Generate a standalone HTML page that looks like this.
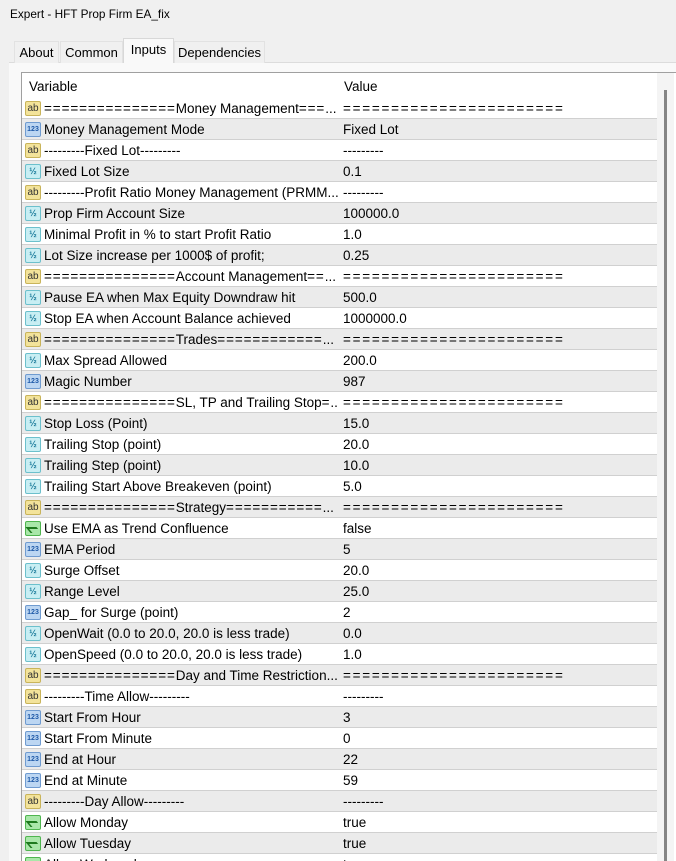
<!DOCTYPE html>
<html><head><meta charset="utf-8"><style>
*{margin:0;padding:0;box-sizing:border-box}
body{width:676px;height:861px;overflow:hidden;background:#f0f0f0;font-family:"Liberation Sans",sans-serif;font-size:13.5px;color:#000;position:relative}
.title{position:absolute;left:10px;top:7px;font-size:11.8px}
.tab{position:absolute;top:41px;height:22px;padding-top:3px;text-align:center;background:#f0f0f0;border:1px solid #e2e2e2;border-bottom:none;font-size:13px}
.tab.sel{top:38px;height:25px;background:#f9f9f9;border-color:#d8d8d8}
.panel{position:absolute;left:9px;top:62px;width:667px;height:799px;background:#f9f9f9;border-top:1px solid #dcdcdc}
.tbl{position:absolute;left:21px;top:72px;width:655px;height:789px;background:#fff;border:1px solid #a0a0a0;border-right:none;border-bottom:none;overflow:hidden}
.hdr{position:absolute;left:0;top:0;width:636px;height:25px}
.hdr span{position:absolute;top:6px}
.row{position:absolute;left:0;width:635px;height:21px;border-bottom:1px solid #d0d0d0}
.row.g{background:#ebebeb}
.row .v{position:absolute;left:22px;top:3px;white-space:nowrap;width:294px;overflow:hidden}
.row .val{position:absolute;left:321px;top:3px;white-space:nowrap}
.v .e{letter-spacing:0.9px}
.val .e{letter-spacing:1.75px}
.ic{position:absolute;left:3px;top:3px;width:16px;height:15px;font-size:8px;font-weight:bold;line-height:13px;text-align:center;border:1px solid;border-radius:2px}
.ab{background:#f3e39a;border-color:#c9b45a;color:#333;font-size:10px;font-weight:normal}
.n{background:#bcd6f2;border-color:#6f9bd0;color:#1f5aa8;font-size:7px}
.d{background:#c8eef3;border-color:#6cc0cc;color:#1a7a9a;font-size:9px}
.b{background:#a9e7a9;border-color:#4fb54f}
.b:after{content:"";position:absolute;left:2px;top:5px;width:9px;height:4px;border-left:2px solid #1e7a1e;border-top:2px solid #1e7a1e;transform:skewX(40deg)}
.sb{position:absolute;left:657px;top:73px;width:17px;height:788px;background:#f4f4f4}
.th{position:absolute;left:664px;top:90px;width:3px;height:771px;background:#858585}
</style></head><body>
<div class="title">Expert - HFT Prop Firm EA_fix</div>
<div class="panel"></div>
<div class="tab" style="left:14px;width:45px">About</div>
<div class="tab" style="left:60px;width:63px">Common</div>
<div class="tab" style="left:174px;width:91px">Dependencies</div>
<div class="tab sel" style="left:123px;width:51px">Inputs</div>
<div class="tbl">
<div class="hdr"><span style="left:7px">Variable</span><span style="left:322px">Value</span></div>
<div id="rows"></div>
</div>
<div class="sb"></div><div class="th"></div>
<script>
var R=[
["ab","===============Money Management===...","======================="],
["n","Money Management Mode","Fixed Lot"],
["ab","---------Fixed Lot---------","---------"],
["d","Fixed Lot Size","0.1"],
["ab","---------Profit Ratio Money Management (PRMM...","---------"],
["d","Prop Firm Account Size","100000.0"],
["d","Minimal Profit in % to start Profit Ratio","1.0"],
["d","Lot Size increase per 1000$ of profit;","0.25"],
["ab","===============Account Management==...","======================="],
["d","Pause EA when Max Equity Downdraw hit","500.0"],
["d","Stop EA when Account Balance achieved","1000000.0"],
["ab","===============Trades============...","======================="],
["d","Max Spread Allowed","200.0"],
["n","Magic Number","987"],
["ab","===============SL, TP and Trailing Stop=...","======================="],
["d","Stop Loss (Point)","15.0"],
["d","Trailing Stop (point)","20.0"],
["d","Trailing Step (point)","10.0"],
["d","Trailing Start Above Breakeven (point)","5.0"],
["ab","===============Strategy===========...","======================="],
["b","Use EMA as Trend Confluence","false"],
["n","EMA Period","5"],
["d","Surge Offset","20.0"],
["d","Range Level","25.0"],
["n","Gap_ for Surge (point)","2"],
["d","OpenWait (0.0 to 20.0, 20.0 is less trade)","0.0"],
["d","OpenSpeed (0.0 to 20.0, 20.0 is less trade)","1.0"],
["ab","===============Day and Time Restriction...","======================="],
["ab","---------Time Allow---------","---------"],
["n","Start From Hour","3"],
["n","Start From Minute","0"],
["n","End at Hour","22"],
["n","End at Minute","59"],
["ab","---------Day Allow---------","---------"],
["b","Allow Monday","true"],
["b","Allow Tuesday","true"],
["b","Allow Wednesday","true"]];
var T={ab:"ab",n:"123",d:"½",b:""};
function f(s){return s.replace(/(=+)/g,'<span class="e">$1</span>');}
var h="";
R.forEach(function(r,i){h+='<div class="row'+(i%2?' g':'')+'" style="top:'+(25+i*21)+'px"><div class="ic '+r[0]+'">'+T[r[0]]+'</div><div class="v">'+f(r[1])+'</div><div class="val">'+f(r[2])+'</div></div>';});
document.getElementById("rows").innerHTML=h;
</script>
</body></html>
